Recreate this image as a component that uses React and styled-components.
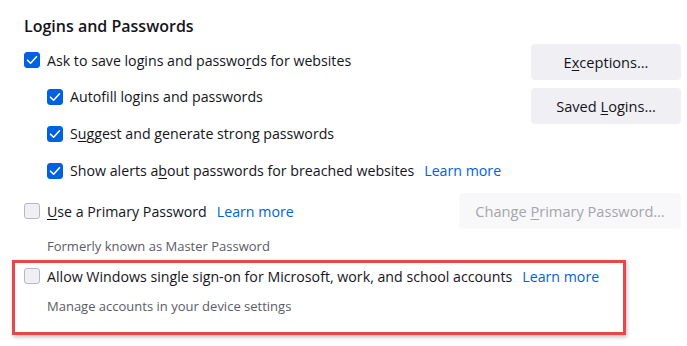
import React from 'react'
import styled, { createGlobalStyle } from 'styled-components'

const Global = createGlobalStyle`
  html, body {
    margin: 0;
    background: #ffffff;
  }
  body {
    font-family: "Open Sans", "Noto Sans", sans-serif;
    color: #15141a;
    font-size: 14.2px;
  }
`

const Page = styled.div`
  width: 687px;
  height: 346px;
  padding: 13px 6px 0 24px;
  box-sizing: border-box;
  overflow: hidden;
`

const Title = styled.h2`
  margin: 0 0 3px;
  font-size: 16px;
  font-weight: 600;
  line-height: 26px;
`

const Group = styled.div`
  display: flex;
  justify-content: space-between;
  align-items: flex-start;
  margin-top: ${p => p.$top || 0}px;
`

const Options = styled.div`
  display: flex;
  flex-direction: column;
`

const Row = styled.label`
  display: flex;
  align-items: center;
  gap: 7px;
  height: ${p => p.$h || 37}px;
  margin-left: ${p => (p.$indent ? 23 : 0)}px;
  white-space: nowrap;
`

const Box = styled.span`
  width: 16px;
  height: 16px;
  box-sizing: border-box;
  border-radius: 3px;
  flex: none;
  display: flex;
  align-items: center;
  justify-content: center;
  background: ${p => (p.$checked ? '#0061e0' : '#f0f0f4')};
  border: 1px solid ${p => (p.$checked ? '#0061e0' : '#b8b8c0')};
`

const Link = styled.a`
  color: #0061e0;
  text-decoration: none;
  margin-left: 3px;
  cursor: pointer;
`

const Buttons = styled.div`
  display: flex;
  flex-direction: column;
  gap: 8px;
  padding-top: 2px;
`

const Button = styled.button`
  font: inherit;
  font-size: 14.6px;
  color: ${p => (p.disabled ? '#a5a5ab' : '#15141a')};
  background: ${p => (p.disabled ? '#f8f8fa' : '#f0f0f4')};
  border: none;
  border-radius: 4px;
  height: 36px;
  min-width: ${p => p.$w || 150}px;
  padding: 0 14px;
  box-sizing: border-box;
`

const Note = styled.div`
  font-size: 13px;
  color: #5b5b66;
  margin-left: 23px;
  margin-top: ${p => p.$top || 0}px;
  line-height: 18px;
`

const Highlight = styled.div`
  margin: 5px 0 0 -12px;
  width: 614px;
  box-sizing: border-box;
  border: 3px solid #e8464b;
  padding: 0 0 0 9px;
  height: 75px;
  box-shadow: 1px 2px 4px rgba(0, 0, 0, 0.25);
`

const U = styled.span`
  text-decoration: underline;
  text-underline-offset: 2px;
`

const Check = () => (
  <svg width="12" height="12" viewBox="0 0 12 12">
    <path d="M1.5 6.2 L4.6 9.2 L10.5 2.8" fill="none" stroke="#fff" strokeWidth="1.6" strokeLinecap="round" strokeLinejoin="round" />
  </svg>
)

const Checkbox = ({ checked }) => <Box $checked={checked}>{checked && <Check />}</Box>

export default function App() {
  return (
    <Page>
      <Global />
      <Title>Logins and Passwords</Title>
      <Group>
        <Options>
          <Row $h={36}>
            <Checkbox checked />
            <span>Ask to save logins and passwo<U>r</U>ds for websites</span>
          </Row>
          <Row $indent>
            <Checkbox checked />
            <span>Autof<U>i</U>ll logins and passwords</span>
          </Row>
          <Row $indent>
            <Checkbox checked />
            <span>S<U>u</U>ggest and generate strong passwords</span>
          </Row>
          <Row $indent>
            <Checkbox checked />
            <span>Show alerts a<U>b</U>out passwords for breached websites</span>
            <Link>Learn more</Link>
          </Row>
        </Options>
        <Buttons>
          <Button>E<U>x</U>ceptions…</Button>
          <Button>Saved <U>L</U>ogins…</Button>
        </Buttons>
      </Group>
      <Group $top={4}>
        <Row $h={36}>
          <Checkbox />
          <span><U>U</U>se a Primary Password</span>
          <Link>Learn more</Link>
        </Row>
        <Button disabled $w={222}>Change <U>P</U>rimary Password…</Button>
      </Group>
      <Note $top={8}>Formerly known as Master Password</Note>
      <Highlight>
        <Row $h={26}>
          <Checkbox />
          <span>Allow Windows single sign-on for Microsoft, work, and school accounts</span>
          <Link>Learn more</Link>
        </Row>
        <Note $top={8}>Manage accounts in your device settings</Note>
      </Highlight>
    </Page>
  )
}
